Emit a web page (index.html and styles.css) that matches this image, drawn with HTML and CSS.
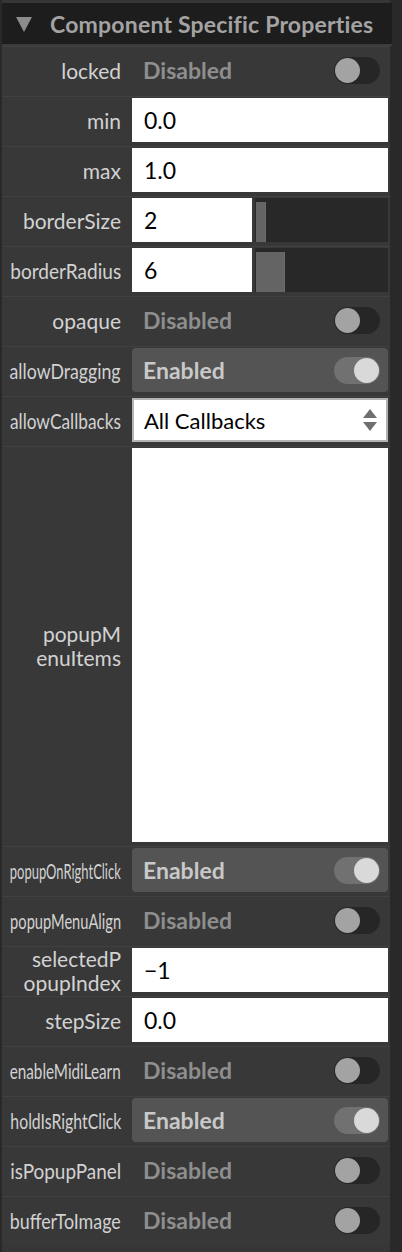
FILE: index.html
```html
<!DOCTYPE html>
<html>
<head>
<meta charset="utf-8">
<link rel="stylesheet" href="styles.css">
</head>
<body>
<div class="panel">
  <div class="header">
    <svg class="tri" width="16" height="15" viewBox="0 0 16 15"><polygon points="0,0 16,0 8,15" fill="#8c8c8c"/></svg>
    <span class="title">Component Specific Properties</span>
  </div>

  <div class="row"><div class="lbl"><span class="t">locked</span></div>
    <div class="val toggle off"><span class="state">Disabled</span><span class="switch"><span class="knob"></span></span></div></div>

  <div class="row"><div class="lbl"><span class="t">min</span></div>
    <div class="val input">0.0</div></div>

  <div class="row"><div class="lbl"><span class="t">max</span></div>
    <div class="val input">1.0</div></div>

  <div class="row"><div class="lbl"><span class="t">borderSize</span></div>
    <div class="val slider"><div class="num">2</div><div class="track"><div class="fill" style="width:10px"></div></div></div></div>

  <div class="row"><div class="lbl"><span class="t">borderRadius</span></div>
    <div class="val slider"><div class="num">6</div><div class="track"><div class="fill" style="width:29px"></div></div></div></div>

  <div class="row"><div class="lbl"><span class="t">opaque</span></div>
    <div class="val toggle off"><span class="state">Disabled</span><span class="switch"><span class="knob"></span></span></div></div>

  <div class="row"><div class="lbl"><span class="t">allowDragging</span></div>
    <div class="val toggle on"><span class="state">Enabled</span><span class="switch"><span class="knob"></span></span></div></div>

  <div class="row"><div class="lbl"><span class="t">allowCallbacks</span></div>
    <div class="val select"><span>All Callbacks</span>
      <svg class="arrows" width="14" height="22" viewBox="0 0 14 22"><polygon points="0,9 7,0 14,9" fill="#707070"/><polygon points="0,13 14,13 7,22" fill="#707070"/></svg>
    </div></div>

  <div class="row tall"><div class="lbl"><span class="t multi">popupM<br>enuItems</span></div>
    <div class="val area"></div></div>

  <div class="row"><div class="lbl"><span class="t">popupOnRightClick</span></div>
    <div class="val toggle on"><span class="state">Enabled</span><span class="switch"><span class="knob"></span></span></div></div>

  <div class="row"><div class="lbl"><span class="t">popupMenuAlign</span></div>
    <div class="val toggle off"><span class="state">Disabled</span><span class="switch"><span class="knob"></span></span></div></div>

  <div class="row"><div class="lbl"><span class="t multi">selectedP<br>opupIndex</span></div>
    <div class="val input">−1</div></div>

  <div class="row"><div class="lbl"><span class="t">stepSize</span></div>
    <div class="val input">0.0</div></div>

  <div class="row"><div class="lbl"><span class="t">enableMidiLearn</span></div>
    <div class="val toggle off"><span class="state">Disabled</span><span class="switch"><span class="knob"></span></span></div></div>

  <div class="row"><div class="lbl"><span class="t">holdIsRightClick</span></div>
    <div class="val toggle on"><span class="state">Enabled</span><span class="switch"><span class="knob"></span></span></div></div>

  <div class="row"><div class="lbl"><span class="t">isPopupPanel</span></div>
    <div class="val toggle off"><span class="state">Disabled</span><span class="switch"><span class="knob"></span></span></div></div>

  <div class="row"><div class="lbl"><span class="t">bufferToImage</span></div>
    <div class="val toggle off"><span class="state">Disabled</span><span class="switch"><span class="knob"></span></span></div></div>
</div>
<script src="fit.js"></script>
</body>
</html>
```

FILE: styles.css
```css
html, body {
  margin: 0;
  padding: 0;
}
body {
  background: #292929;
  font-family: Lato, "Open Sans", sans-serif;
  width: 402px;
  height: 1252px;
  overflow: hidden;
}
.panel {
  margin-left: 2px;
  width: 388px;
  padding-top: 3px;
  padding-bottom: 6px;
  background: #363636;
}
.header {
  height: 41px;
  margin-right: -2px;
  background: #1d1d1d;
  border-bottom: 2px solid #3b3b3b;
  display: flex;
  align-items: center;
  padding-left: 14px;
  gap: 18px;
}
.tri {
  display: block;
  margin-top: 1px;
}
.title {
  color: #a3a3a3;
  font-weight: bold;
  font-size: 23px;
  letter-spacing: 0.2px;
  white-space: nowrap;
}
.row {
  display: flex;
  height: 50px;
  box-sizing: border-box;
  border-top: 1px solid #414141;
  background: #383838;
}
.row.tall {
  height: 400px;
}
.lbl {
  width: 122px;
  box-sizing: border-box;
  padding: 0 3px 2px 8px;
  display: flex;
  align-items: center;
  justify-content: flex-end;
  text-align: right;
}
.lbl .t {
  display: inline-block;
  white-space: nowrap;
  color: #d2d2d2;
  font-size: 21px;
  line-height: 24px;
  transform-origin: right center;
}
.lbl .t.multi {
  line-height: 24px;
}
.val {
  margin: 1px 2px 0 8px;
  width: 256px;
  height: 44px;
  box-sizing: border-box;
}
.tall .val {
  height: 394px;
}
.toggle {
  display: flex;
  align-items: center;
  justify-content: space-between;
  padding: 0 8px 0 11px;
  border-radius: 4px;
}
.state {
  font-weight: bold;
  font-size: 23px;
}
.toggle.off .state {
  color: #8e8e8e;
}
.toggle.on {
  background: #545454;
}
.toggle.on .state {
  color: #c9c9c9;
}
.switch {
  width: 46px;
  height: 27px;
  border-radius: 14px;
  box-sizing: border-box;
  padding: 0 1px;
  display: flex;
  align-items: center;
  background: #262626;
}
.knob {
  width: 25px;
  height: 25px;
  border-radius: 50%;
  background: #a3a3a3;
}
.toggle.on .switch {
  background: #717171;
  justify-content: flex-end;
}
.toggle.on .knob {
  background: #d9d9d9;
}
.input {
  background: #ffffff;
  color: #000;
  font-size: 23px;
  display: flex;
  align-items: center;
  padding-left: 12px;
}
.slider {
  display: flex;
  gap: 3px;
}
.num {
  width: 120px;
  background: #fff;
  color: #000;
  font-size: 23px;
  display: flex;
  align-items: center;
  padding-left: 12px;
  box-sizing: border-box;
}
.track {
  flex: 1;
  background: #282828;
  display: flex;
  align-items: flex-end;
  padding-left: 1px;
}
.fill {
  height: 40px;
  background: #646464;
  border-right: 1px solid #6c6c6c;
  box-sizing: border-box;
}
.select {
  background: #fff;
  border: 2px solid #b3b3b3;
  display: flex;
  align-items: center;
  justify-content: space-between;
  padding: 0 9px 0 10px;
  color: #000;
  font-size: 22px;
}
.arrows {
  display: block;
}
.area {
  background: #fff;
}
```

FILE: fit.js
```js
document.querySelectorAll('.lbl .t').forEach(function (el) {
  var max = 111;
  var w = el.getBoundingClientRect().width;
  if (w > max) {
    el.style.transform = 'scaleX(' + (max / w).toFixed(4) + ')';
  }
});
```
